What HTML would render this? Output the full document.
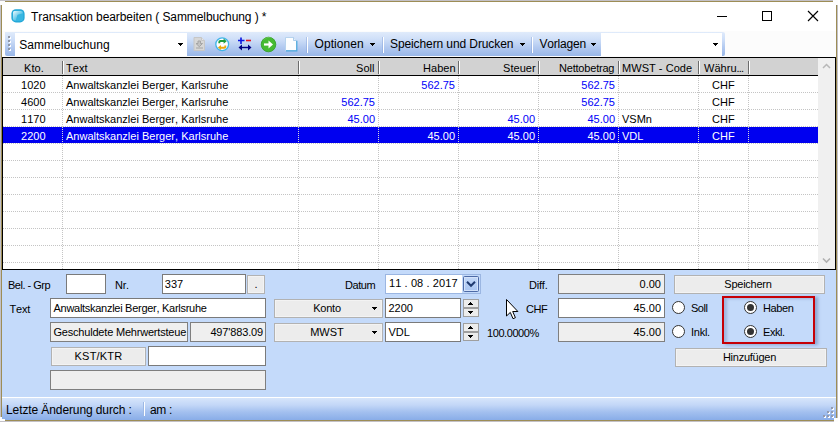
<!DOCTYPE html>
<html><head><meta charset="utf-8">
<style>
*{box-sizing:border-box;margin:0;padding:0}
html,body{width:838px;height:422px;overflow:hidden;background:#c3c1c7}
body{position:relative;font-family:"Liberation Sans",sans-serif;font-size:11px;color:#000;font-kerning:none}
.a{position:absolute;white-space:nowrap}
#win{left:1px;top:1px;width:836px;height:420px;background:#fff;border:1px solid #9d8d56}
.ttl{left:31px;top:9px;font-size:12px;line-height:16px;letter-spacing:-.08px}
#tbrow{left:2px;top:31px;width:834px;height:26px;background:#fcfcfc}
#tb{left:5px;top:32px;width:720px;height:24px;background:linear-gradient(#e0ebfb 0%,#cfdff8 30%,#b2c9f0 65%,#99b7e8 100%);border-radius:0 2px 2px 2px}
.tbt{top:36px;font-size:12px;line-height:16px}
.sep{top:37px;width:1px;height:16px;background:rgba(130,160,215,.45);box-shadow:1px 0 0 #fff}
.arr{width:5px;height:1px;background:#000;box-shadow:0 0 0 #000}.arr::before{content:"";position:absolute;left:1px;top:1px;width:3px;height:1px;background:#000}.arr::after{content:"";position:absolute;left:2px;top:2px;width:1px;height:1px;background:#000}
.arr.up{transform:none;margin-top:2px}.arr.up::before{top:-1px}.arr.up::after{top:-2px}
#grid{left:2px;top:57px;width:834px;height:213px;background:#fff;border:1px solid #000}
#hdr{left:3px;top:58px;width:815px;height:17px;background:#d2d2d2}
#hline{left:3px;top:75px;width:815px;height:1px;background:#000}
.h{top:62px;line-height:13px;letter-spacing:.04px}
.hs{top:61px;width:1px;height:13px;background:#6c6c6c;box-shadow:1px 0 0 #fff}
.r{line-height:13px;letter-spacing:.01px}
.rr{text-align:right;letter-spacing:0}
.b{color:#0000f8}
.w{color:#fff}
.vl{top:76px;width:1px;height:193px;background-image:linear-gradient(#c4c4c4 50%,transparent 50%);background-size:1px 2px}
.hl{left:3px;width:815px;height:1px;background-image:linear-gradient(90deg,#c4c4c4 50%,transparent 50%);background-size:2px 1px}
#sel{left:3px;top:127px;width:815px;height:16px;background:#0000f0}
#sb{left:818px;top:58px;width:17px;height:211px;background:#f0f0f0}
#panel{left:2px;top:270px;width:834px;height:127px;background:#c4dafa}
#status{left:2px;top:397px;width:834px;height:23px;background:linear-gradient(#fff 0,#fff 1px,#d6e5fb 1px,#c3d7f7 8px,#a3c0ef 15px,#89ade8 23px)}
.tx{background:#fff;border:1px solid #7a7a7a;height:20px;line-height:18px;padding:0 3px 0 2.500px;letter-spacing:-.28px;overflow:hidden}
.tg{background:#efefef;border:1px solid #7f7f7f;height:20px;line-height:18px;padding:0 3px 0 2.500px;letter-spacing:-.28px;overflow:hidden}
.bt{background:#ececec;border:1px solid #b2b2b2;height:19px;line-height:17px;text-align:center;box-shadow:inset 0 0 0 1px #f3f3f3;letter-spacing:-.25px}
.lb{line-height:13px;letter-spacing:-.3px}
.rd{width:13px;height:13px;border-radius:50%;border:1px solid #333;background:#fff}
.rd.on::after{content:"";position:absolute;left:2px;top:2px;width:7px;height:7px;border-radius:50%;background:#333}
.sp{width:16px;height:9px;border:1px solid #9f9f9f;background:#ececec}
</style></head><body>
<div class="a" id="win"></div>
<svg class="a" style="left:10px;top:8px" width="16" height="16" viewBox="0 0 16 16"><defs><linearGradient id="ig" x1="0" y1="0" x2="1" y2="1"><stop offset="0" stop-color="#eefafe"/><stop offset="0.5" stop-color="#6fcdeb"/><stop offset="1" stop-color="#2aaedb"/></linearGradient></defs><rect x="1.400" y="1.200" width="13.200" height="13.200" rx="4.500" fill="#1fa5d6"/><rect x="2.600" y="2.400" width="10.800" height="10.800" rx="3" fill="#38b6e1"/><path d="M3 4.500q0-1.500 1.500-1.500h6q2 0 2.500 2.200l-5.500 1.600-1.800 5.700q-2.700 .3-2.700-2z" fill="url(#ig)"/></svg>
<div class="a ttl">Transaktion bearbeiten ( Sammelbuchung ) *</div>
<svg class="a" style="left:700px;top:2px" width="136" height="29" viewBox="0 0 136 29"><g stroke="#000" stroke-width="1" fill="none"><path d="M17 14.500h10"/><rect x="62.500" y="9.500" width="9" height="9"/><path d="M108 9l10 10M118 9l-10 10" stroke-width="1.150"/></g></svg>
<div class="a" id="tbrow"></div>
<div class="a" id="tb"></div>

<div class="a" style="left:9px;top:37px;width:2px;height:2px;background:#fff"></div><div class="a" style="left:8px;top:36px;width:2px;height:2px;background:#9097a8"></div>
<div class="a" style="left:9px;top:41px;width:2px;height:2px;background:#fff"></div><div class="a" style="left:8px;top:40px;width:2px;height:2px;background:#9097a8"></div>
<div class="a" style="left:9px;top:45px;width:2px;height:2px;background:#fff"></div><div class="a" style="left:8px;top:44px;width:2px;height:2px;background:#9097a8"></div>
<div class="a" style="left:9px;top:49px;width:2px;height:2px;background:#fff"></div><div class="a" style="left:8px;top:48px;width:2px;height:2px;background:#9097a8"></div>

<div class="a" style="left:15px;top:33px;width:172px;height:23px;background:#fff"></div>
<div class="a tbt" style="left:19.200px;top:37px;letter-spacing:.03px">Sammelbuchung</div>
<div class="a arr" style="left:178px;top:43px"></div>
<svg class="a" style="left:190px;top:34px" width="112" height="20" viewBox="0 0 112 20">
<path d="M4 3.500h7.500l3 3v10h-10.500z" fill="#d7d7d7" stroke="#c6c6c6"/><path d="M11.500 3.500v3h3" fill="#e6e6e6" stroke="#c6c6c6"/><path d="M8 7h2.500v2.500h2l-3.200 3.200-3.300-3.200h2zM6 14h7" stroke="#a4a4a4" fill="#c4c4c4"/>
<circle cx="32.200" cy="10.200" r="6.400" fill="#fdfeff" stroke="#3fb4e8" stroke-width="1.300"/><path d="M29.300 9.300v-1.300q0-1 1-1h4" fill="none" stroke="#1e9e3a" stroke-width="1.900"/><path d="M33.600 4.600l3.100 2.600-3.100 2.600z" fill="#1e9e3a"/><path d="M35.300 11.500v1.300q0 1-1 1h-4" fill="none" stroke="#eaa80c" stroke-width="1.900"/><path d="M31 10.900l-3.100 2.600 3.100 2.600z" fill="#eaa80c"/>
<path d="M48 6.500h6.500M51 3.500v6.500" stroke="#0a14e0" stroke-width="1.600"/><path d="M56 6.500h5" stroke="#e8141e" stroke-width="1.600"/><path d="M50 13.500h10" stroke="#000080" stroke-width="1.400"/><path d="M48.500 13.500l3.500-3v6zM61.500 13.500l-3.500-3v6z" fill="#000080"/>
<circle cx="78.500" cy="10.500" r="7.300" fill="#46bb32" stroke="#2f9a22" stroke-width=".8"/><path d="M72.500 7a7 7 0 0 1 10-2.500a9 9 0 0 0-10 2.500z" fill="#8fdc7a" opacity=".7"/><path d="M74 10.500h6" stroke="#fff" stroke-width="2.200"/><path d="M78.500 6.500l4.500 4-4.500 4z" fill="#fff"/>
<path d="M95.500 3.500h8l3 3v10h-11z" fill="#fdfeff" stroke="#b7d3ee"/><path d="M96 16.800h10.800v-10" fill="none" stroke="#4ba8dd" stroke-width="1.200"/><path d="M103.500 3.500v3h3" fill="#e3eefa" stroke="#9cc3e6" stroke-width=".8"/>
</svg>
<div class="a sep" style="left:306px"></div>
<div class="a tbt" style="left:314.500px;letter-spacing:.08px">Optionen</div><div class="a arr" style="left:370px;top:43px"></div>
<div class="a sep" style="left:382px"></div>
<div class="a tbt" style="left:390px;letter-spacing:-.1px">Speichern und Drucken</div><div class="a arr" style="left:520px;top:43px"></div>
<div class="a sep" style="left:531px"></div>
<div class="a tbt" style="left:539.500px;letter-spacing:-.2px">Vorlagen</div><div class="a arr" style="left:591px;top:43px"></div>
<div class="a" style="left:601px;top:33px;width:121px;height:23px;background:#fff"></div>
<div class="a arr" style="left:713px;top:43px"></div>
<div class="a" id="grid"></div>
<div class="a" id="hdr"></div><div class="a" id="hline"></div>
<div class="a" id="sb"></div>
<svg class="a" style="left:818px;top:58px" width="17" height="17"><path d="M5 10l3.500-3.500 3.500 3.500" stroke="#b8b8b8" stroke-width="1.500" fill="none"/></svg>
<svg class="a" style="left:818px;top:252px" width="17" height="17"><path d="M5 6.500l3.500 3.500 3.500-3.500" stroke="#b0b0b0" stroke-width="1.600" fill="none"/></svg>

<div class="a h" style="left:24px">Kto.</div>
<div class="a h" style="left:66px">Text</div>
<div class="a h" style="left:356px">Soll</div>
<div class="a h" style="left:423px">Haben</div>
<div class="a h" style="left:503px">Steuer</div>
<div class="a h" style="left:559px;letter-spacing:-.2px">Nettobetrag</div>
<div class="a h" style="left:622px">MWST - Code</div>
<div class="a h" style="left:704px">Währu<span style="letter-spacing:-.8px">...</span></div>
<div class="a hs" style="left:62px"></div><div class="a vl" style="left:62px"></div>
<div class="a hs" style="left:298px"></div><div class="a vl" style="left:298px"></div>
<div class="a hs" style="left:378px"></div><div class="a vl" style="left:378px"></div>
<div class="a hs" style="left:458px"></div><div class="a vl" style="left:458px"></div>
<div class="a hs" style="left:538px"></div><div class="a vl" style="left:538px"></div>
<div class="a hs" style="left:618px"></div><div class="a vl" style="left:618px"></div>
<div class="a hs" style="left:698px"></div><div class="a vl" style="left:698px"></div>
<div class="a hs" style="left:748px"></div><div class="a vl" style="left:748px"></div>
<div class="a" id="sel"></div>
<div class="a vl" style="left:62px;top:127px;height:16px;background-image:linear-gradient(#d6d6d6 50%,transparent 50%)"></div>
<div class="a vl" style="left:298px;top:127px;height:16px;background-image:linear-gradient(#d6d6d6 50%,transparent 50%)"></div>
<div class="a vl" style="left:378px;top:127px;height:16px;background-image:linear-gradient(#d6d6d6 50%,transparent 50%)"></div>
<div class="a vl" style="left:458px;top:127px;height:16px;background-image:linear-gradient(#d6d6d6 50%,transparent 50%)"></div>
<div class="a vl" style="left:538px;top:127px;height:16px;background-image:linear-gradient(#d6d6d6 50%,transparent 50%)"></div>
<div class="a vl" style="left:618px;top:127px;height:16px;background-image:linear-gradient(#d6d6d6 50%,transparent 50%)"></div>
<div class="a vl" style="left:698px;top:127px;height:16px;background-image:linear-gradient(#d6d6d6 50%,transparent 50%)"></div>
<div class="a vl" style="left:748px;top:127px;height:16px;background-image:linear-gradient(#d6d6d6 50%,transparent 50%)"></div>
<div class="a hl" style="top:92px"></div>
<div class="a hl" style="top:109px"></div>
<div class="a hl" style="top:126px"></div>
<div class="a hl" style="top:143px"></div>
<div class="a hl" style="top:160px"></div>
<div class="a hl" style="top:177px"></div>
<div class="a hl" style="top:194px"></div>
<div class="a hl" style="top:211px"></div>
<div class="a hl" style="top:228px"></div>
<div class="a hl" style="top:245px"></div>
<div class="a hl" style="top:262px"></div>
<div class="a r" style="left:21px;top:79px">1020</div><div class="a r" style="left:66px;top:79px">Anwaltskanzlei Berger, Karlsruhe</div>
<div class="a r rr b" style="left:395px;width:60px;top:79px">562.75</div>
<div class="a r rr b" style="left:555px;width:60px;top:79px">562.75</div>
<div class="a r" style="left:712px;top:79px">CHF</div>
<div class="a r" style="left:21px;top:96px">4600</div><div class="a r" style="left:66px;top:96px">Anwaltskanzlei Berger, Karlsruhe</div>
<div class="a r rr b" style="left:315px;width:60px;top:96px">562.75</div>
<div class="a r rr b" style="left:555px;width:60px;top:96px">562.75</div>
<div class="a r" style="left:712px;top:96px">CHF</div>
<div class="a r" style="left:21px;top:113px">1170</div><div class="a r" style="left:66px;top:113px">Anwaltskanzlei Berger, Karlsruhe</div>
<div class="a r rr b" style="left:315px;width:60px;top:113px">45.00</div>
<div class="a r rr b" style="left:475px;width:60px;top:113px">45.00</div>
<div class="a r rr b" style="left:555px;width:60px;top:113px">45.00</div>
<div class="a r" style="left:622px;top:113px">VSMn</div>
<div class="a r" style="left:712px;top:113px">CHF</div>
<div class="a r w" style="left:21px;top:130px">2200</div><div class="a r w" style="left:66px;top:130px">Anwaltskanzlei Berger, Karlsruhe</div>
<div class="a r rr w" style="left:395px;width:60px;top:130px">45.00</div>
<div class="a r rr w" style="left:475px;width:60px;top:130px">45.00</div>
<div class="a r rr w" style="left:555px;width:60px;top:130px">45.00</div>
<div class="a r w" style="left:622px;top:130px">VDL</div>
<div class="a r w" style="left:712px;top:130px">CHF</div>

<div class="a" id="panel"></div>
<div class="a lb" style="left:8px;top:279px;letter-spacing:-.5px">Bel. - Grp</div>
<div class="a tx" style="left:66px;top:274px;width:40px"></div>
<div class="a lb" style="left:115px;top:279px">Nr.</div>
<div class="a tx" style="left:162px;top:274px;width:84px;letter-spacing:0;padding-left:1.800px">337</div>
<div class="a bt" style="left:247px;top:275px;width:18px">.</div>
<div class="a lb" style="left:345px;top:279px;letter-spacing:-.45px">Datum</div>
<div class="a" style="left:385px;top:274px;width:96px;height:20px;background:#c4dafa;border:1px solid #9bb6e2"></div>
<div class="a" style="left:386px;top:275px;width:76px;height:18px;background:#fff;line-height:17px;padding-left:3px;letter-spacing:.1px">11 . 08 . 2017</div>
<div class="a" style="left:463px;top:276px;width:16px;height:16px;border:1px solid #4d6aa6;border-radius:1.500px;background:linear-gradient(#c3d8f8,#a9c5f2);box-shadow:inset 0 0 0 1px #d3e2fa"></div>
<svg class="a" style="left:463px;top:276px" width="16" height="16"><path d="M4 5.800l4 4 4-4" stroke="#1f3a70" stroke-width="2" fill="none"/></svg>
<div class="a lb" style="left:529px;top:279px;letter-spacing:-.2px">Diff.</div>
<div class="a tg" style="left:558px;top:274px;width:107px;text-align:right;letter-spacing:0">0.00</div>
<div class="a bt" style="left:674px;top:275px;width:151px;padding-right:3px">Speichern</div>
<div class="a lb" style="left:9.500px;top:303px;letter-spacing:-.2px">Text</div>
<div class="a tx" style="left:50px;top:298px;width:216px">Anwaltskanzlei Berger, Karlsruhe</div>
<div class="a bt" style="left:274px;top:299px;width:109px;padding-right:3px">Konto</div><div class="a arr" style="left:372px;top:307px"></div>
<div class="a tx" style="left:385px;top:298px;width:76px;letter-spacing:0">2200</div>
<div class="a sp" style="left:463px;top:299px"></div><div class="a sp" style="left:463px;top:308px"></div>
<div class="a arr up" style="left:468px;top:302px"></div><div class="a arr" style="left:468px;top:311px"></div>
<div class="a lb" style="left:526px;top:303px;letter-spacing:-.45px">CHF</div>
<div class="a tx" style="left:558px;top:298px;width:107px;text-align:right;letter-spacing:0">45.00</div>
<div class="a rd" style="left:672px;top:301px"></div><div class="a lb" style="left:691px;top:302px;letter-spacing:-.5px">Soll</div>
<div class="a rd on" style="left:744px;top:301px"></div><div class="a lb" style="left:763px;top:302px;letter-spacing:-.4px">Haben</div>
<div class="a tg" style="left:50px;top:322px;width:138px;letter-spacing:-.2px">Geschuldete Mehrwertsteue</div>
<div class="a tg" style="left:190px;top:322px;width:76px;text-align:right;letter-spacing:-.15px;padding-right:2px">497'883.09</div>
<div class="a bt" style="left:274px;top:323px;width:109px;letter-spacing:0;padding-right:3px">MWST</div><div class="a arr" style="left:372px;top:331px"></div>
<div class="a tx" style="left:385px;top:322px;width:76px;letter-spacing:0">VDL</div>
<div class="a sp" style="left:463px;top:323px"></div><div class="a sp" style="left:463px;top:332px"></div>
<div class="a arr up" style="left:468px;top:326px"></div><div class="a arr" style="left:468px;top:335px"></div>
<div class="a lb" style="left:487px;top:327px;letter-spacing:-.42px">100.0000%</div>
<div class="a tg" style="left:558px;top:322px;width:107px;text-align:right;letter-spacing:0">45.00</div>
<div class="a rd" style="left:672px;top:325px"></div><div class="a lb" style="left:691px;top:326px;letter-spacing:-.25px">Inkl.</div>
<div class="a rd on" style="left:744px;top:325px"></div><div class="a lb" style="left:763px;top:326px;letter-spacing:-.45px">Exkl.</div>
<div class="a" style="left:722px;top:296px;width:93px;height:48px;border:2px solid #c60006;box-shadow:3px 1px 3px rgba(70,95,150,.42),inset 3px 1px 3px rgba(70,95,150,.28)"></div>
<div class="a bt" style="left:51px;top:347px;width:95px;letter-spacing:.2px">KST/KTR</div>
<div class="a tx" style="left:148px;top:346px;width:118px"></div>
<div class="a bt" style="left:675px;top:348px;width:152px;padding-right:3px">Hinzufügen</div>
<div class="a tg" style="left:50px;top:370px;width:216px"></div>
<svg class="a" style="left:505px;top:298px" width="15" height="22" viewBox="0 0 15 22"><path d="M1.500 1.500L1.500 18L5.300 14.400L8 20.700L10.400 19.700L7.700 13.500L12.900 13.500Z" fill="#fff" stroke="#000" stroke-width="1" stroke-linejoin="miter"/></svg>
<div class="a" id="status"></div>
<div class="a" style="left:6px;top:402px;font-size:12px;line-height:16px;letter-spacing:-.1px">Letzte Änderung durch :</div>
<div class="a" style="left:143px;top:402px;width:1px;height:14px;background:#9db8e4;box-shadow:1px 0 0 #fff"></div>
<div class="a" style="left:150px;top:402px;font-size:12px;line-height:16px;letter-spacing:-.3px">am :</div>

<div class="a" style="left:0;top:1px;width:5px;height:4px;background:#fdfdfd"></div><div class="a" style="left:833px;top:0;width:5px;height:5px;background:#fdfdfd"></div><div class="a" style="left:0;top:417px;width:2px;height:4px;background:#fdfdfd"></div><div class="a" style="left:2px;top:419px;width:3px;height:2px;background:#fdfdfd"></div><div class="a" style="left:834px;top:418px;width:4px;height:4px;background:#fdfdfd"></div>
<div class="a" style="left:832px;top:408px;width:2px;height:2px;background:#fff"></div><div class="a" style="left:831px;top:407px;width:2px;height:2px;background:#939bb0"></div>
<div class="a" style="left:828px;top:412px;width:2px;height:2px;background:#fff"></div><div class="a" style="left:827px;top:411px;width:2px;height:2px;background:#939bb0"></div>
<div class="a" style="left:832px;top:412px;width:2px;height:2px;background:#fff"></div><div class="a" style="left:831px;top:411px;width:2px;height:2px;background:#939bb0"></div>
<div class="a" style="left:824px;top:416px;width:2px;height:2px;background:#fff"></div><div class="a" style="left:823px;top:415px;width:2px;height:2px;background:#939bb0"></div>
<div class="a" style="left:828px;top:416px;width:2px;height:2px;background:#fff"></div><div class="a" style="left:827px;top:415px;width:2px;height:2px;background:#939bb0"></div>
<div class="a" style="left:832px;top:416px;width:2px;height:2px;background:#fff"></div><div class="a" style="left:831px;top:415px;width:2px;height:2px;background:#939bb0"></div>
</body></html>
